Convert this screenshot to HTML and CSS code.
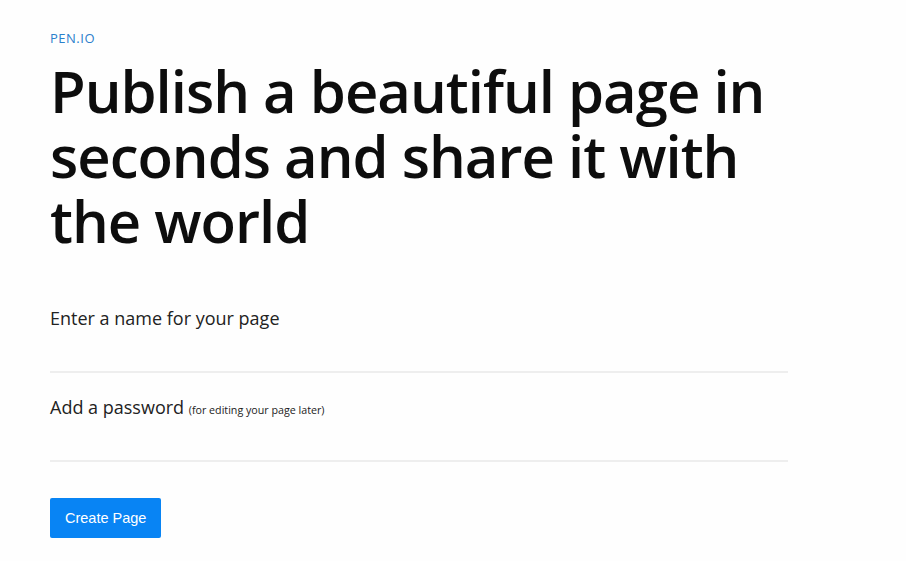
FILE: index.html
```html
<!DOCTYPE html>
<html lang="en">
<head>
    <meta charset="UTF-8">
    <meta name="viewport" content="width=device-width, initial-scale=1.0">
    <title>Pen.io</title>
    <link rel="stylesheet" href="styles.css">
</head>
<body>
<div class="container">
    <div class="brand">PEN.IO</div>
    <h1>Publish a beautiful page in seconds and share it with the world</h1>

    <form class="create-form" onsubmit="return false;">
        <div class="field">
            <label for="pageName">Enter a name for your page</label>
            <input type="text" id="pageName">
        </div>
        <div class="field">
            <label for="password">Add a password <small>(for editing your page later)</small></label>
            <input type="password" id="password">
        </div>
        <button type="submit">Create Page</button>
    </form>
</div>
</body>
</html>
```

FILE: styles.css
```css
body {
    font-family: "Open Sans", "Noto Sans", sans-serif;
    background-color: #fefefe;
    color: #111;
    margin: 0;
}
.container {
    padding: 29px 50px;
    max-width: 738px;
}
.brand {
    color: #2b80cc;
    font-size: 13px;
    letter-spacing: 0.5px;
}
h1 {
    font-size: 58px;
    font-weight: 600;
    line-height: 65px;
    margin: 11px 0 53px;
    letter-spacing: -1px;
    color: #0d0d0d;
}
.field {
    display: flex;
    flex-direction: column;
}
label {
    font-size: 18px;
    color: #222;
}
small {
    font-size: 10.7px;
}
input {
    border: none;
    border-bottom: 2px solid #eee;
    background: transparent;
    height: 41px;
    margin-bottom: 22px;
    outline: none;
    font-size: 18px;
    padding: 0;
}
button {
    margin-top: 14px;
    background-color: #0884f4;
    color: white;
    border: none;
    border-radius: 2px;
    padding: 0 15px;
    height: 40px;
    font-family: "Liberation Sans", Arial, sans-serif;
    font-size: 14.5px;
    cursor: pointer;
}
```
